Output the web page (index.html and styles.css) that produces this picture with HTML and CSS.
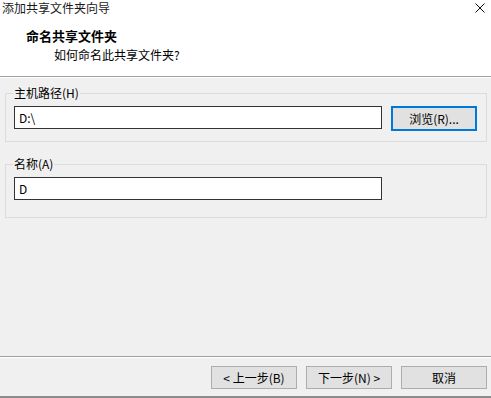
FILE: index.html
```html
<!DOCTYPE html>
<html lang="zh-CN">
<head>
    <meta charset="UTF-8">
    <meta name="viewport" content="width=device-width, initial-scale=1.0">
    <title>添加共享文件夹向导</title>
    <link rel="stylesheet" href="styles.css">
</head>
<body>
    <header class="wizard-top">
        <div class="titlebar">
            <span>添加共享文件夹向导</span>
            <svg class="close" width="10" height="10" viewBox="0 0 10 10">
                <path d="M0.5 0.5 L9.5 9.5 M9.5 0.5 L0.5 9.5" stroke="#111" stroke-width="1" fill="none"/>
            </svg>
        </div>
        <h1 class="heading">命名共享文件夹</h1>
        <p class="subtitle">如何命名此共享文件夹?</p>
    </header>
    <main class="content">
        <fieldset class="group">
            <legend>主机路径(H)</legend>
            <div class="row">
                <input type="text" class="field" value="D:\">
                <button class="btn btn-focus">浏览(R)...</button>
            </div>
        </fieldset>
        <fieldset class="group group-name">
            <legend>名称(A)</legend>
            <div class="row">
                <input type="text" class="field" value="D">
            </div>
        </fieldset>
    </main>
    <footer class="footer">
        <div class="buttons">
            <button class="btn">&lt; 上一步(B)</button>
            <button class="btn">下一步(N) &gt;</button>
            <button class="btn">取消</button>
        </div>
        <div class="bottom-edge"></div>
    </footer>
</body>
</html>
```

FILE: styles.css
```css
html, body {
    height: 100%;
}
body {
    margin: 0;
    font-family: "Noto Sans CJK SC", "Noto Sans", sans-serif;
    font-size: 12px;
    color: #000;
    background-color: #f0f0f0;
    display: flex;
    flex-direction: column;
    overflow: hidden;
}
.wizard-top {
    background-color: #fff;
    height: 76px;
    border-bottom: 1px solid #a0a0a0;
}
.titlebar {
    display: flex;
    justify-content: space-between;
    align-items: flex-start;
    height: 16px;
    line-height: 16px;
    padding-left: 2px;
    color: #1a1a1a;
}
.close {
    margin-top: 3px;
    margin-right: 6px;
}
.heading {
    margin: 13px 0 0 0;
    padding-left: 26px;
    font-size: 13px;
    line-height: 14px;
    font-weight: bold;
}
.subtitle {
    margin: 5px 0 0 0;
    padding-left: 54px;
    line-height: 14px;
}
.content {
    border-top: 1px solid #fff;
}
.group {
    margin: 8px 4px 0 5px;
    padding: 6px 8px 10px 8px;
    border: 1px solid #dcdcdc;
}
.group legend {
    padding: 0 1px;
    margin-left: -1px;
    line-height: 14px;
}
.group-name {
    margin-top: 15px;
    padding-bottom: 17px;
}
.row {
    display: flex;
    align-items: flex-start;
    gap: 9px;
}
.field {
    width: 368px;
    height: 23px;
    box-sizing: border-box;
    border: 1px solid #333;
    padding: 0 4px;
    font: inherit;
    background: #fff;
    outline: none;
}
.btn {
    width: 86px;
    height: 23px;
    box-sizing: border-box;
    border: 1px solid #adadad;
    background-color: #e1e1e1;
    font: inherit;
    color: #000;
    padding: 0;
}
.btn-focus {
    height: 25px;
    border: 2px solid #0078d7;
}
.footer {
    margin-top: auto;
    border-top: 1px solid #a0a0a0;
}
.buttons {
    border-top: 1px solid #fff;
    display: flex;
    justify-content: flex-end;
    gap: 9px;
    padding: 8px 4px 7px 0;
}
.bottom-edge {
    height: 2px;
    background-color: #8c8c8c;
}
```
